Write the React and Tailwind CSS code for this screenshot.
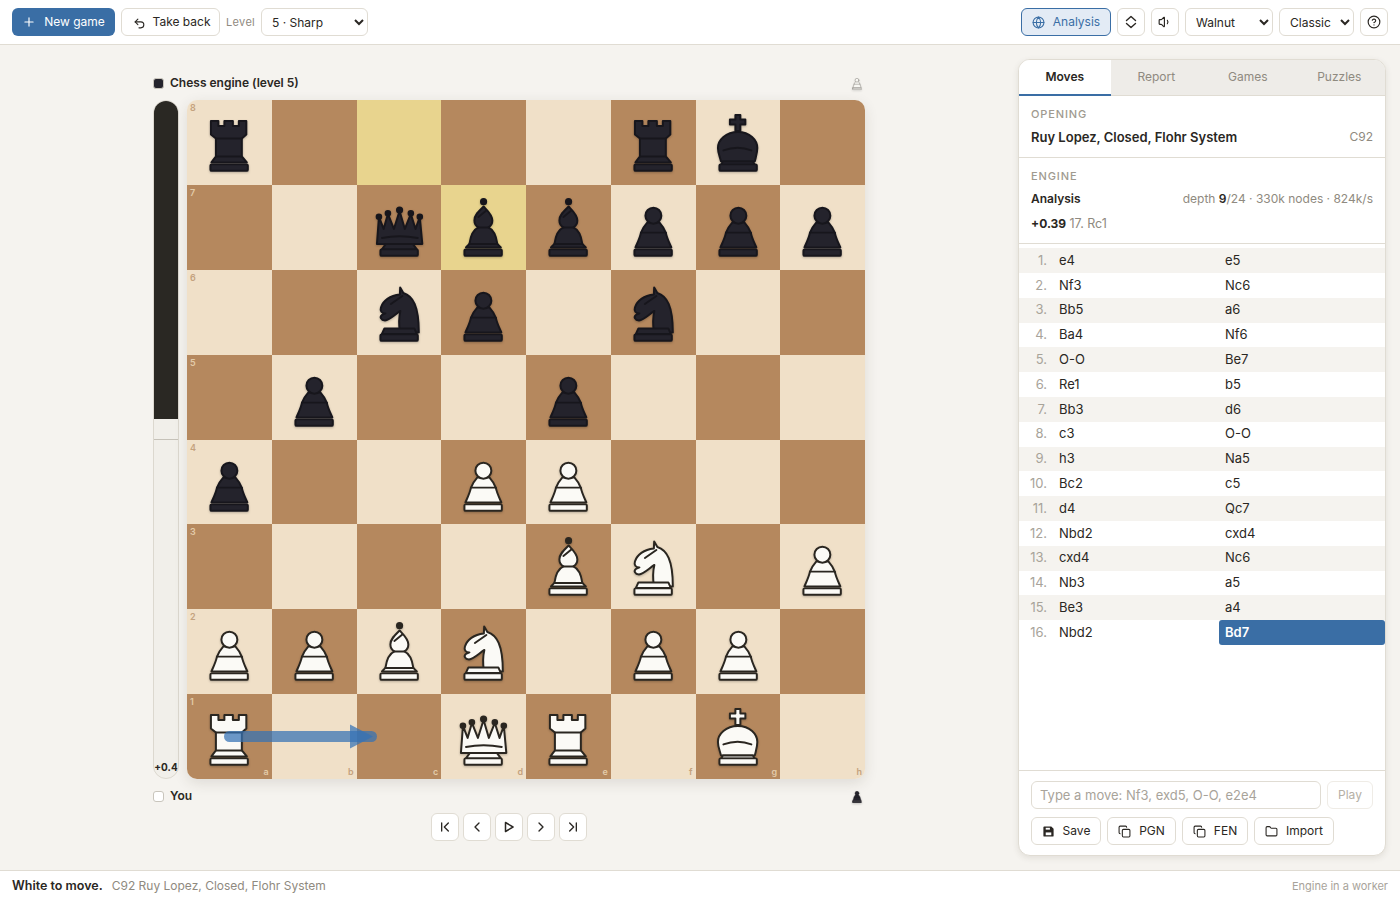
import { useState } from 'react';
import {
  Plus,
  Undo2,
  Globe,
  Volume1,
  CircleHelp,
  ChevronFirst,
  ChevronLeft,
  ChevronRight,
  ChevronLast,
  Copy,
  Folder,
} from 'lucide-react';

const POSITION = [
  'r....rk.',
  '..qbbppp',
  '..np.n..',
  '.p..p...',
  'p..PP...',
  '....BN.P',
  'PPBN.PP.',
  'R..QR.K.',
];

const MOVES = [
  ['e4', 'e5'], ['Nf3', 'Nc6'], ['Bb5', 'a6'], ['Ba4', 'Nf6'],
  ['O-O', 'Be7'], ['Re1', 'b5'], ['Bb3', 'd6'], ['c3', 'O-O'],
  ['h3', 'Na5'], ['Bc2', 'c5'], ['d4', 'Qc7'], ['Nbd2', 'cxd4'],
  ['cxd4', 'Nc6'], ['Nb3', 'a5'], ['Be3', 'a4'], ['Nbd2', 'Bd7'],
];

const HIGHLIGHT = ['0-2', '1-3'];

// piece drawings, all in the 85x85 box of a square
const Base = () => <rect x="23.5" y="64.5" width="37.5" height="6.5" rx="1.2" />;

const SHAPES = {
  p: (
    <>
      <path d="M36.5 37.5C32.5 42 31 45 30 48C29 53 26.5 58 24.5 62.5H60.5C58.5 58 56 53 55 48C54 45 52.5 42 48.5 37.5Z" />
      <circle cx="42.5" cy="30.7" r="8" />
      <path d="M30 47.7H55" fill="none" />
      <Base />
    </>
  ),
  r: (
    <>
      <path d="M24 21H31.5V26H37.5V21H46V26H52V21H59.5V34.5L55 38.5V56.5L60 62.5H24.5L29 56.5V38.5L24 34.5Z" />
      <path d="M29 38.5H55M29 56.5H55" fill="none" />
      <Base />
    </>
  ),
  b: (
    <>
      <circle cx="42.7" cy="16.7" r="2.6" className="lined" />
      <path d="M42.7 21.5C38 26 33.5 30 33.5 35.5C33.5 38.5 35 41 37.5 42.5C32 45 29.5 52 28.5 59L25 62.5H60L56.5 59C55.5 52 53 45 47.5 42.5C50 41 51.5 38.5 51.5 35.5C51.5 30 47 26 42.7 21.5Z" />
      <path d="M37.5 32L45.5 25.5M37.5 42.5H47.5M28.5 59H56.5" fill="none" />
      <Base />
    </>
  ),
  n: (
    <>
      <path d="M43.3 17.5L46.5 23C56 26 62 36 62 62.5H43C42 55 42 47 43.5 41C38 44.5 33 50 28 50.5C24 50.5 22.5 47 25 45L28.5 43.5C24.5 43.5 23 41 24 37.5C26 31 33 25.5 43 24.5Z" />
      <path d="M34 34L45.5 26" fill="none" />
      <path d="M27.5 58.5H57.5L60 64H25Z" />
      <Base />
    </>
  ),
  q: (
    <>
      <path d="M22 32L26.7 44L31 29L37 44L42.7 26L48 44L54 29L58.7 44L63 32L65.5 59H20Z" />
      <circle cx="22" cy="31.7" r="2.3" className="lined" />
      <circle cx="31" cy="28.3" r="2.3" className="lined" />
      <circle cx="42.7" cy="25" r="2.6" className="lined" />
      <circle cx="54" cy="28.3" r="2.3" className="lined" />
      <circle cx="63" cy="31.7" r="2.3" className="lined" />
      <path d="M25 53Q42.5 49.5 61 53" fill="none" />
      <path d="M29 59H56L60 64.5H25Z" />
      <Base />
    </>
  ),
  k: (
    <>
      <path d="M39.5 15H44.5V19.5H49.5V24.5H44.5V31H39.5V24.5H34V19.5H39.5Z" />
      <path d="M42 32C30 32 22 40 22 48C22 53 24 57 25 61.5H59C60 57 61.5 53 61.5 48C61.5 40 54 32 42 32Z" />
      <path d="M27.5 50.5Q42 45 55.5 50.5" fill="none" />
      <path d="M27 61.5H57L59 65H25Z" />
      <Base />
    </>
  ),
};

const Piece = ({ code, className = 'w-full h-full' }) => {
  const black = code === code.toLowerCase();
  return (
    <svg
      viewBox="0 0 85 85"
      className={`${className} drop-shadow-[0_1px_1px_rgba(0,0,0,0.25)] ${
        black
          ? 'fill-[#24232c] stroke-[#17161c] [&_.lined]:fill-[#17161c]'
          : 'fill-[#fbfaf6] stroke-[#2a2620] [&_.lined]:fill-[#2a2620]'
      }`}
      strokeWidth="2"
      strokeLinejoin="round"
      strokeLinecap="round"
    >
      {SHAPES[code.toLowerCase()]}
    </svg>
  );
};

const Square = ({ code, rank, file }) => {
  const light = (rank + file) % 2 === 0;
  const marked = HIGHLIGHT.includes(`${rank}-${file}`);
  const coord = light ? 'text-[#c4a27e]' : 'text-[#e3cba9]';
  return (
    <div className={`relative ${marked ? 'bg-[#e8d48e]' : light ? 'bg-[#f0e0c8]' : 'bg-[#b5885e]'}`}>
      {file === 0 && (
        <span className={`absolute top-[2px] left-[3px] text-[9px] leading-[12px] font-semibold ${coord}`}>
          {8 - rank}
        </span>
      )}
      {rank === 7 && (
        <span className={`absolute bottom-[1px] right-[3px] text-[9px] leading-[12px] font-semibold ${coord}`}>
          {'abcdefgh'[file]}
        </span>
      )}
      {code !== '.' && <Piece code={code} />}
    </div>
  );
};

const IconButton = ({ children }) => (
  <button className="w-7 h-7 flex items-center justify-center bg-white border border-[#e0dcd3] rounded-md text-[#2a2723]">
    {children}
  </button>
);

const ActionButton = ({ icon, label, className }) => (
  <button className={`h-7 flex items-center justify-center gap-2 bg-white border border-[#e0dcd3] rounded-md text-xs text-[#2a2723] ${className}`}>
    {icon}
    {label}
  </button>
);

const Board = () => (
  <div className="relative w-[678px] h-[679px] rounded-[10px] overflow-hidden shadow-[0_4px_14px_rgba(60,50,30,0.12)] grid grid-cols-8 grid-rows-8">
    {POSITION.map((row, r) =>
      row.split('').map((code, f) => <Square key={`${r}-${f}`} code={code} rank={r} file={f} />)
    )}
    {/* best move arrow */}
    <svg viewBox="0 0 678 679" className="absolute inset-0 w-full h-full pointer-events-none">
      <path d="M42.5 636.5H184.5" stroke="#3572b5" strokeWidth="11" strokeLinecap="round" opacity="0.72" />
      <path d="M163 624.5L186 636.5L163 648.5Z" fill="#3572b5" opacity="0.72" />
    </svg>
  </div>
);

const EvalBar = () => (
  <div className="relative w-[26px] h-[679px] rounded-full overflow-hidden border border-[#dcd8cf] bg-[#f1efea]">
    <div className="h-[318px] bg-[#2a2823]" />
    <div className="mt-[20px] h-px bg-[#c6c2b9]" />
    <span className="absolute bottom-[4px] left-0 right-0 text-center text-[10px] leading-[14px] font-bold text-[#2a2723]">
      +0.4
    </span>
  </div>
);

const App = () => {
  const [tab] = useState('Moves');

  return (
    <div className="h-screen flex flex-col bg-[#f5f3ef] text-[#2a2723] font-['Inter',sans-serif]">
      {/* top bar */}
      <header className="h-[45px] shrink-0 flex items-center justify-between px-3 bg-white border-b border-[#e0dcd3]">
        <div className="flex items-center gap-1.5">
          <button className="w-[103px] h-7 flex items-center justify-center gap-2 bg-[#3a6ea5] text-white text-xs rounded-md">
            <Plus size={14} />
            New game
          </button>
          <button className="w-[99px] h-7 flex items-center justify-center gap-[7px] pl-[2px] bg-white border border-[#e0dcd3] rounded-md text-xs">
            <Undo2 size={13} className="mt-[3px]" />
            Take back
          </button>
          <span className="w-[29px] text-[11px] tracking-[0.03em] text-[#8f8a80]">Level</span>
          <select defaultValue="5" className="w-[107px] h-7 pl-[6px] bg-white border border-[#e0dcd3] rounded-md text-xs">
            <option value="5">5 · Sharp</option>
          </select>
        </div>
        <div className="flex items-center gap-1.5">
          <button className="w-[90px] h-7 flex items-center justify-center gap-2 bg-[#e3ebf5] border border-[#3a6ea5] text-[#3a6ea5] rounded-md text-xs">
            <Globe size={13} />
            Analysis
          </button>
          <IconButton>
            <svg viewBox="0 0 14 14" className="w-[14px] h-[14px]" fill="none" stroke="currentColor" strokeWidth="1.4" strokeLinecap="round" strokeLinejoin="round">
              <path d="M2.5 5.5L7 1.5L11.5 5.5M2.5 8.5L7 12.5L11.5 8.5" />
            </svg>
          </IconButton>
          <IconButton>
            <Volume1 size={14} />
          </IconButton>
          <select defaultValue="w" className="w-[88px] h-7 pl-[6px] bg-white border border-[#e0dcd3] rounded-md text-xs">
            <option value="w">Walnut</option>
          </select>
          <select defaultValue="c" className="w-[75px] h-7 pl-[6px] bg-white border border-[#e0dcd3] rounded-md text-xs">
            <option value="c">Classic</option>
          </select>
          <IconButton>
            <CircleHelp size={14} />
          </IconButton>
        </div>
      </header>

      <main className="flex-1 min-h-0 flex">
        {/* board side */}
        <section className="flex-1 flex justify-center pt-[29px]">
          <div className="w-[712px]">
            <div className="h-[18px] mb-2 flex items-center justify-between">
              <div className="flex items-center gap-1.5 text-xs font-semibold">
                <span className="w-[11px] h-[11px] rounded-[3px] bg-[#24232c] border border-[#c9c5bc]" />
                Chess engine (level 5)
              </div>
              <div className="w-5 h-5 -mr-0.5 opacity-60"><Piece code="P" /></div>
            </div>
            <div className="flex gap-2">
              <EvalBar />
              <Board />
            </div>
            <div className="h-[18px] mt-2 flex items-center justify-between">
              <div className="flex items-center gap-1.5 text-xs font-semibold">
                <span className="w-[11px] h-[11px] rounded-[3px] bg-white border border-[#c9c5bc]" />
                You
              </div>
              <div className="w-5 h-5 -mr-0.5"><Piece code="p" /></div>
            </div>
            <div className="mt-2 flex justify-center gap-1">
              <IconButton><ChevronFirst size={16} /></IconButton>
              <IconButton><ChevronLeft size={16} /></IconButton>
              <IconButton>
                <svg viewBox="0 0 16 16" className="w-4 h-4" fill="none" stroke="currentColor" strokeWidth="1.5" strokeLinejoin="round">
                  <path d="M4.5 3.5L12 8L4.5 12.5Z" />
                </svg>
              </IconButton>
              <IconButton><ChevronRight size={16} /></IconButton>
              <IconButton><ChevronLast size={16} /></IconButton>
            </div>
          </div>
        </section>

        {/* side panel */}
        <aside className="w-[368px] mt-[14px] mb-[14px] mr-[14px] flex flex-col bg-white border border-[#e0dcd3] rounded-xl overflow-hidden shadow-[0_2px_6px_rgba(60,50,30,0.1)]">
          <div className="h-9 shrink-0 flex bg-[#eeece8] border-b border-[#e0dcd3]">
            {['Moves', 'Report', 'Games', 'Puzzles'].map((name) => (
              <div
                key={name}
                className={`flex-1 flex items-center justify-center text-xs ${
                  name === tab
                    ? 'bg-white font-semibold text-[#2a2723] border-b-2 border-[#3a6ea5] -mb-px'
                    : 'text-[#8f8a80] pb-0.5'
                }`}
              >
                {name}
              </div>
            ))}
          </div>

          <div className="h-[62px] shrink-0 px-3 pt-[11px] border-b border-[#e0dcd3]">
            <div className="text-[11px] leading-[14px] font-medium tracking-[0.08em] text-[#a09a8f]">OPENING</div>
            <div className="mt-[7px] flex items-center justify-between text-[13px] leading-[18px]">
              <span className="font-semibold">Ruy Lopez, Closed, Flohr System</span>
              <span className="text-[#8f8a80] text-xs">C92</span>
            </div>
          </div>

          <div className="h-[86px] shrink-0 px-3 pt-[11px] border-b border-[#e0dcd3]">
            <div className="text-[11px] leading-[14px] font-medium tracking-[0.08em] text-[#a09a8f]">ENGINE</div>
            <div className="mt-[8px] flex items-center justify-between text-xs leading-[16px]">
              <span className="font-semibold">Analysis</span>
              <span className="text-[#8f8a80]">
                depth <b className="font-semibold text-[#2a2723]">9</b>/24 · 330k nodes · 824k/s
              </span>
            </div>
            <div className="mt-[9px] text-xs leading-[16px] text-[#8f8a80]">
              <b className="font-bold text-[#2a2723]">+0.39</b> <span className="text-[12.5px]">17. Rc1</span>
            </div>
          </div>

          <div className="flex-1 min-h-0 pt-[4.2px]">
            {MOVES.map(([white, black], i) => (
              <div
                key={i}
                className={`h-[24.8px] grid grid-cols-[34px_166px_166px] items-center text-[13px] ${
                  i % 2 === 0 ? 'bg-[#f5f3ef]' : ''
                }`}
              >
                <span className="text-right pr-[6px] text-[#a8a39a]">{i + 1}.</span>
                <span className="pl-[6px]">{white}</span>
                {i === 15 ? (
                  <span className="h-full pl-[6px] flex items-center bg-[#3a6ea5] text-white font-semibold rounded-[3px]">{black}</span>
                ) : (
                  <span className="pl-[6px]">{black}</span>
                )}
              </div>
            ))}
          </div>

          <div className="h-[85px] shrink-0 px-3 pt-[10px] border-t border-[#e0dcd3]">
            <div className="flex gap-1.5">
              <input
                placeholder="Type a move: Nf3, exd5, O-O, e2e4"
                className="w-[290px] h-7 px-2 bg-white border border-[#e0dcd3] rounded-md text-[13px] placeholder:text-[#a8a39a]"
              />
              <button className="w-[46px] h-7 border border-[#efece6] rounded-md text-xs text-[#b5b0a6]">Play</button>
            </div>
            <div className="mt-2 flex gap-1.5">
              <ActionButton
                className="w-[70px]"
                icon={
                  <svg viewBox="0 0 14 14" className="w-[13px] h-[13px]">
                    <path d="M1.5 2.5A1 1 0 0 1 2.5 1.5H10L12.5 4V11.5A1 1 0 0 1 11.5 12.5H2.5A1 1 0 0 1 1.5 11.5Z" fill="#2a2723" />
                    <rect x="4" y="8" width="6" height="3" fill="#fff" />
                    <rect x="4" y="3" width="4.5" height="2" fill="#fff" />
                  </svg>
                }
                label="Save"
              />
              <ActionButton className="w-[69px]" icon={<Copy size={13} />} label="PGN" />
              <ActionButton className="w-[66px]" icon={<Copy size={13} />} label="FEN" />
              <ActionButton className="w-[80px]" icon={<Folder size={13} />} label="Import" />
            </div>
          </div>
        </aside>
      </main>

      <footer className="h-[30px] shrink-0 flex items-center justify-between px-3 bg-white border-t border-[#e0dcd3] text-xs leading-[16px]">
        <div className="flex items-center gap-[9px]">
          <span className="font-semibold text-[12.5px] leading-[16px]">White to move.</span>
          <span className="text-[#8f8a80]">C92 Ruy Lopez, Closed, Flohr System</span>
        </div>
        <span className="text-[11px] text-[#a8a39a]">Engine in a worker</span>
      </footer>
    </div>
  );
};

export default App;
